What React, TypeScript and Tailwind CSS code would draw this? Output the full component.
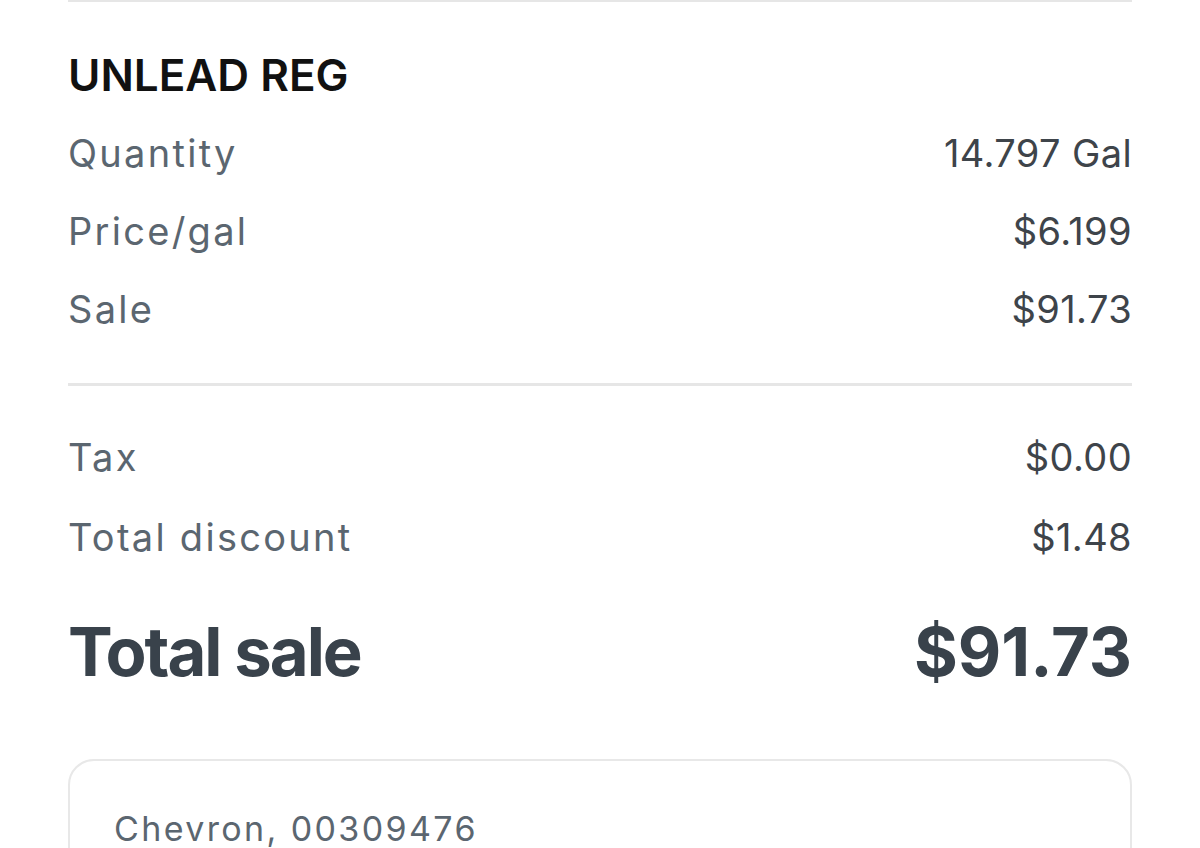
export default function App() {
  const fuelRows = [
    { label: "Quantity", value: "14.797 Gal" },
    { label: "Price/gal", value: "$6.199" },
    { label: "Sale", value: "$91.73" },
  ]

  const taxRows = [
    { label: "Tax", value: "$0.00" },
    { label: "Total discount", value: "$1.48" },
  ]

  return (
    <div className="h-[848px] w-full overflow-hidden bg-white font-['Inter','Noto_Sans',sans-serif]">
      <div className="mx-[68px] border-t-2 border-[#e6e6e6]">
        <h2 className="mt-[34px] h-[78px] text-[44px] font-semibold leading-[78px] text-[#111111]">UNLEAD REG</h2>

        {fuelRows.map((row) => (
          <div key={row.label} className="flex h-[78px] items-center justify-between text-[38px]">
            <span className="tracking-[0.06em] text-[#5b6670]">{row.label}</span>
            <span className="tracking-[0.01em] text-[#3e444a]">{row.value}</span>
          </div>
        ))}

        <div className="mt-[35px] border-t-[3px] border-[#e6e6e6]" />

        <div className="pt-[31px]">
          {taxRows.map((row) => (
            <div key={row.label} className="flex h-[80px] items-center justify-between text-[38px]">
              <span className="tracking-[0.06em] text-[#5b6670]">{row.label}</span>
              <span className="tracking-[0.01em] text-[#3e444a]">{row.value}</span>
            </div>
          ))}
        </div>

        <div className="mt-[34px] flex h-[80px] items-center justify-between text-[67px] font-bold leading-none text-[#39424b]">
          <span className="tracking-[-0.03em]">Total sale</span>
          <span>$91.73</span>
        </div>

        <div className="mt-[68px] rounded-[26px] border-2 border-[#e8e8e8] px-[44px] pt-[42px] pb-10">
          <p className="text-[34px] tracking-[0.07em] text-[#5b6670]">Chevron, 00309476</p>
        </div>
      </div>
    </div>
  )
}
